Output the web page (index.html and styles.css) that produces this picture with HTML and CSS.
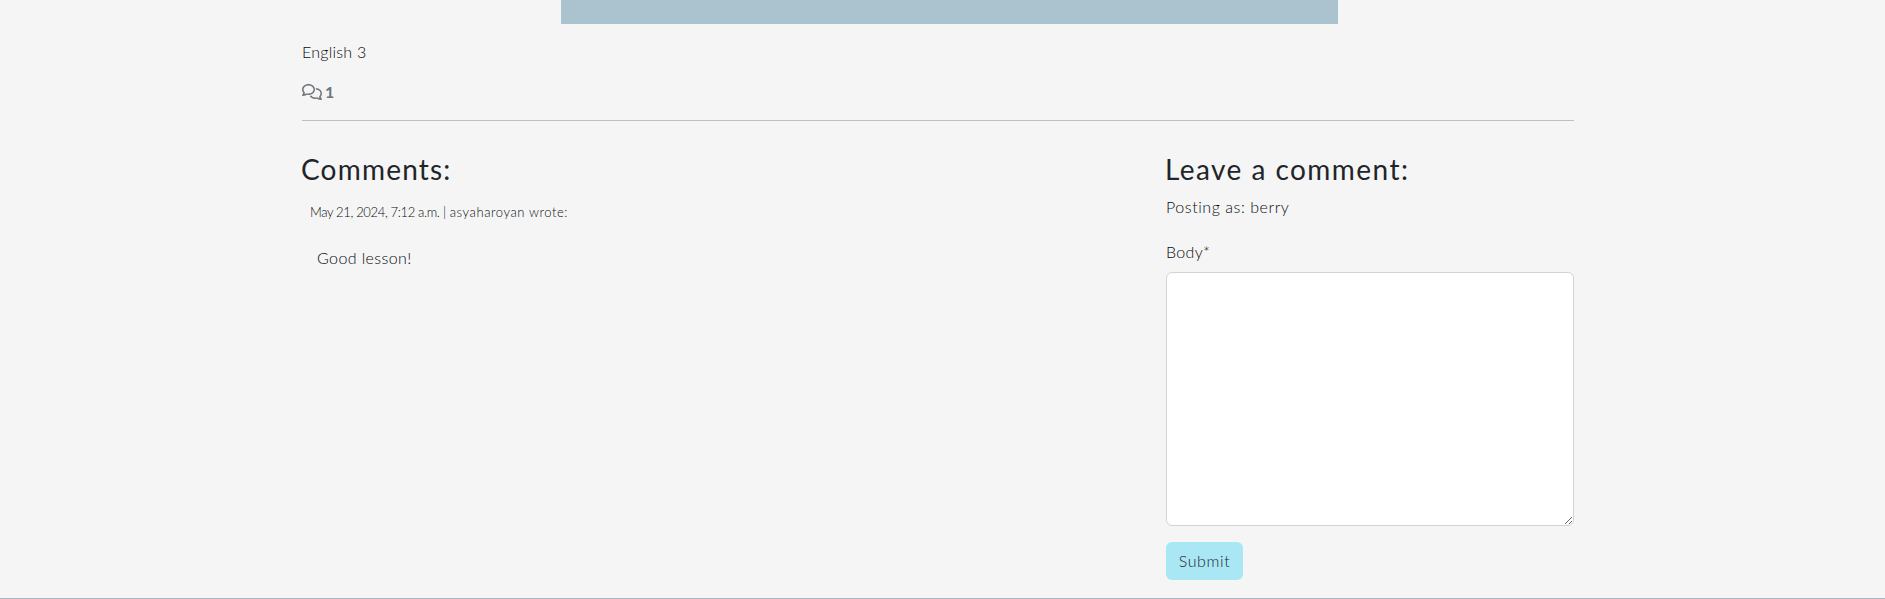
FILE: index.html
```html
<!DOCTYPE html>
<html lang="en">
<head>
<meta charset="utf-8">
<title>English 3</title>
<link rel="stylesheet" href="styles.css">
</head>
<body>
<main class="page">
  <div class="banner"></div>
  <section class="lesson">
    <p class="title">English 3</p>
    <div class="count">
      <svg class="chat" viewBox="0 0 640 512" aria-hidden="true"><path d="M88.200 309.100c9.800-18.300 6.800-40.800-7.500-55.800C59.400 230.900 48 204 48 176c0-63.500 63.800-128 160-128s160 64.500 160 128s-63.800 128-160 128c-13.100 0-25.800-1.300-37.800-3.600c-10.400-2-21.200-.6-30.700 4.200c-4.100 2.100-8.300 4.100-12.600 6c-16 7.200-32.900 13.500-49.900 18c2.800-4.600 5.400-9.100 7.900-13.600c1.100-1.900 2.200-3.900 3.200-5.900zM0 176c0 41.800 17.200 80.100 45.900 110.300c-.9 1.700-1.900 3.500-2.800 5.100c-10.300 18.400-22.300 36.500-36.600 52.100c-6.600 7-8.300 17.200-4.600 25.900C5.800 378.300 14.400 384 24 384c43 0 86.500-13.300 122.700-29.700c4.800-2.200 9.600-4.500 14.200-6.800c15.100 3 30.900 4.500 47.100 4.500c114.900 0 208-78.800 208-176S322.900 0 208 0S0 78.800 0 176zM432 480c16.200 0 31.900-1.600 47.100-4.500c4.600 2.300 9.400 4.600 14.200 6.800C529.500 498.700 573 512 616 512c9.600 0 18.200-5.700 22-14.500c3.800-8.800 2-19-4.600-25.900c-14.200-15.600-26.200-33.700-36.600-52.100c-.9-1.700-1.900-3.400-2.800-5.100C622.800 384.100 640 345.800 640 304c0-94.400-87.900-171.500-198.200-175.800c4.100 15.200 6.200 31.200 6.200 47.800l0 .6c87.200 6.700 144 67.500 144 127.400c0 28-11.400 54.900-32.700 77.200c-14.300 15-17.300 37.600-7.500 55.800c1.100 2 2.200 4 3.200 5.900c2.500 4.500 5.200 9 7.900 13.600c-17-4.500-33.900-10.700-49.900-18c-4.300-1.900-8.500-3.900-12.600-6c-9.500-4.800-20.300-6.200-30.700-4.200c-12.100 2.400-24.700 3.600-37.800 3.600c-61.700 0-110-26.500-136.800-62.300c-16 5.400-32.800 9.400-50 11.800C279 439.800 350 480 432 480z"/></svg>
      <span class="number">1</span>
    </div>
  </section>
  <div class="columns">
    <section class="comments">
      <h2 class="heading heading-comments">Comments:</h2>
      <p class="meta"><span class="date">May 21, 2024, 7:12 a.m.</span> | <span class="author">asyaharoyan wrote:</span></p>
      <p class="comment">Good lesson!</p>
    </section>
    <form class="form">
      <h2 class="heading heading-leave">Leave a comment:</h2>
      <p class="posting">Posting as: berry</p>
      <label class="label" for="body">Body*</label>
      <textarea class="field" id="body"></textarea>
      <button class="submit" type="button">Submit</button>
    </form>
  </div>
</main>
<footer class="footer"></footer>
</body>
</html>
```
FILE: styles.css
```css
* { box-sizing: border-box; }
body {
  margin: 0;
  height: 599px;
  overflow: hidden;
  display: flex;
  flex-direction: column;
  background: #f5f5f5;
  color: #080c10;
  font: 300 16px/24px Lato, "Open Sans", sans-serif;
}
p, h2 { margin: 0; white-space: nowrap; }
.page { width: 1272px; height: 598px; margin-left: 302px; }
.banner { width: 777px; height: 24px; margin-left: 259px; background: #abc2cf; }
.lesson { height: 97px; padding-top: 16px; border-bottom: 1px solid #bfc0c0; }
.title { width: max-content; letter-spacing: .25px; }
.count { display: flex; align-items: center; height: 24px; margin-top: 16px; color: #6c757d; }
.chat { width: 20px; height: 16px; fill: currentColor; }
.number { margin-left: 3px; font-weight: 700; }
.columns { display: flex; justify-content: space-between; padding-top: 31px; }
.heading { width: max-content; height: 35px; color: #212529; font-size: 28px; line-height: 34px; font-weight: 400; }
.heading-comments { margin-left: -1px; letter-spacing: 1.2px; }
.heading-leave { margin-left: -1px; letter-spacing: 1.45px; }
.meta { width: max-content; margin: 15px 0 0 8px; font-size: 13px; line-height: 20px; }
.date { letter-spacing: -.35px; }
.author { letter-spacing: .58px; }
.comment { width: max-content; margin: 24px 0 0 15px; letter-spacing: .4px; }
.form { display: flex; flex-direction: column; align-items: flex-start; width: 408px; }
.posting { margin-top: 8px; letter-spacing: .55px; }
.label { margin-top: 21px; letter-spacing: .3px; }
.field { width: 408px; height: 254px; margin: 8px 0 16px; border: 1px solid #ced4da; border-radius: 6px; background: #fff; resize: vertical; }
.submit { width: 77px; height: 38px; padding: 0; border: 0; border-radius: 6px; background: #a9e7f4; color: #212529; font: inherit; letter-spacing: .6px; }
.footer { height: 1px; background: #adb5bd; }
```
